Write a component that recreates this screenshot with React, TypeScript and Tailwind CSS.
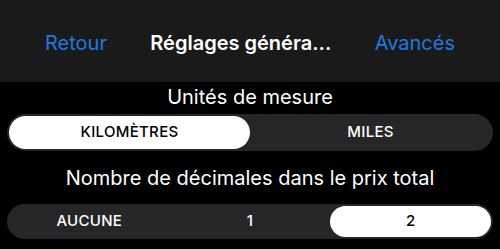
import React, { useState } from 'react';

const font = { fontFamily: 'Inter, "Liberation Sans", Arial, sans-serif' };

interface SegmentedProps {
  options: string[];
  value: number;
  onChange: (i: number) => void;
  heightClass: string;
}

const Segmented: React.FC<SegmentedProps> = ({ options, value, onChange, heightClass }) => (
  <div className={`mx-[7px] flex rounded-full bg-[#262628] p-[2px] ${heightClass}`}>
    {options.map((opt, i) => (
      <button
        key={opt}
        onClick={() => onChange(i)}
        className={`flex flex-1 items-center justify-center rounded-full text-[15px] font-medium tracking-[0.3px] ${
          i === value ? 'bg-white text-black' : 'text-white'
        }`}
      >
        {opt}
      </button>
    ))}
  </div>
);

export default function App() {
  const [unit, setUnit] = useState(0);
  const [decimals, setDecimals] = useState(2);

  return (
    <div className="h-[249px] w-[500px] overflow-hidden bg-black text-white" style={font}>
      {/* Navigation bar */}
      <div className="flex h-[82px] items-center justify-between bg-[#1a1a1a] px-[45px] pt-[3px] text-[20px]">
        <button className="text-[#1c7ae4]">Retour</button>
        <span className="font-semibold">Réglages généra...</span>
        <button className="text-[#1c7ae4]">Avancés</button>
      </div>

      <div className="mt-[3px] text-center text-[20px] leading-[24px]">Unités de mesure</div>
      <div className="mt-[5px]">
        <Segmented
          options={['KILOMÈTRES', 'MILES']}
          value={unit}
          onChange={setUnit}
          heightClass="h-[37px]"
        />
      </div>

      <div className="mt-[15px] text-center text-[20px] leading-[24px]">
        Nombre de décimales dans le prix total
      </div>
      <div className="mt-[14px]">
        <Segmented
          options={['AUCUNE', '1', '2']}
          value={decimals}
          onChange={setDecimals}
          heightClass="h-[35px]"
        />
      </div>
    </div>
  );
}
